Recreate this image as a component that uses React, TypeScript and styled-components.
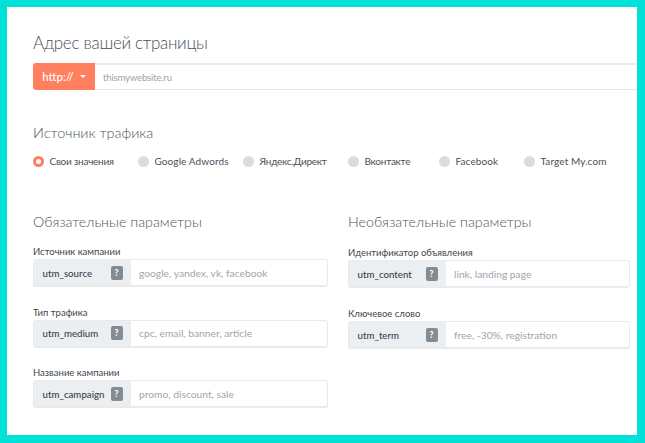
import React from "react";
import styled, { createGlobalStyle } from "styled-components";

const Global = createGlobalStyle`
  html, body { margin: 0; padding: 0; background: #00e2d8; }
  #root { width: 645px; height: 443px; overflow: hidden; }
  * { box-sizing: border-box; }
`;

const Frame = styled.div`
  width: 645px;
  height: 443px;
  border: solid #00e2d8;
  border-width: 7px 8px 8px 7px;
  background: #fff;
  padding: 0 0 0 26px;
  font-family: Lato, "Noto Sans", sans-serif;
  overflow: hidden;
`;

const Title = styled.h1`
  margin: 0;
  padding-top: 24px;
  height: 56px;
  font-size: 17px;
  letter-spacing: -0.3px;
  line-height: 24px;
  font-weight: 300;
  color: #4a5058;
`;

const UrlBar = styled.div`
  display: flex;
  height: 27px;
`;

const Scheme = styled.div`
  width: 62px;
  display: flex;
  align-items: center;
  justify-content: center;
  gap: 6px;
  background: #ff7f5f;
  border-radius: 3px 0 0 3px;
  color: #fff;
  font-size: 11.5px;
  font-weight: 500;
`;

const Caret = styled.span`
  width: 0;
  height: 0;
  border: 3px solid transparent;
  border-top-color: #fff;
  border-bottom-width: 0;
`;

const UrlField = styled.div`
  flex: 1;
  display: flex;
  align-items: center;
  padding: 0 0 0 8px;
  border-top: 2px solid #ececec;
  border-bottom: 1px solid #e6e6e6;
  font-size: 9.5px;
  letter-spacing: -0.15px;
  color: #9aa3ab;
`;

const SourceHeading = styled.h2`
  margin: 31px 0 0;
  height: 24px;
  font-size: 14.4px;
  line-height: 24px;
  font-weight: 300;
  color: #4e545b;
`;

const Radios = styled.div`
  margin-top: 9px;
  height: 14px;
  display: flex;
`;

const Radio = styled.label<{ $w: number; $tight?: boolean }>`
  width: ${(p) => p.$w}px;
  display: flex;
  align-items: center;
  gap: 5.5px;
  font-size: 10px;
  letter-spacing: ${(p) => (p.$tight ? "-0.25px" : "0.1px")};
  color: #4a5058;
  white-space: nowrap;
`;

const Dot = styled.span<{ $on?: boolean }>`
  width: 11px;
  height: 11px;
  flex: none;
  border-radius: 50%;
  background: ${(p) => (p.$on ? "#fff" : "#dcdcdc")};
  border: ${(p) => (p.$on ? "3px solid #ff7f5f" : "none")};
`;

const Columns = styled.div`
  margin-top: 42px;
  display: grid;
  grid-template-columns: 295px 282px;
  column-gap: 20px;
`;

const Column = styled.section`
  display: flex;
  flex-direction: column;
`;

const ColHeading = styled.h2<{ $gap: number }>`
  margin: 0 0 ${(p) => p.$gap}px;
  height: 24px;
  font-size: 14.25px;
  line-height: 24px;
  font-weight: 300;
  color: #4e545b;
`;

const Field = styled.div<{ $gap: number }>`
  margin-bottom: ${(p) => p.$gap}px;
`;

const FieldLabel = styled.div`
  height: 14px;
  font-size: 9.5px;
  line-height: 14px;
  color: #3f454c;
`;

const InputGroup = styled.div`
  display: flex;
  height: 28px;
  border: 1px solid #e8eaec;
  border-bottom-width: 2px;
  border-radius: 3px;
  overflow: hidden;
`;

const Addon = styled.div`
  flex: none;
  width: 97px;
  display: flex;
  align-items: center;
  justify-content: space-between;
  padding: 0 8.5px;
  background: #ebeff2;
  font-size: 9.7px;
  font-weight: 500;
  color: #3b4148;
`;

const Help = styled.span`
  width: 12px;
  height: 14px;
  flex: none;
  display: flex;
  align-items: center;
  justify-content: center;
  border-radius: 2px;
  background: #838b93;
  color: #fff;
  font-size: 8.5px;
  font-weight: 900;
`;

const Hint = styled.div`
  flex: 1;
  display: flex;
  align-items: center;
  padding-left: 8px;
  font-size: 10.25px;
  color: #9da6ad;
  white-space: nowrap;
`;

const radios: [string, number, boolean][] = [
  ["Свои значения", 105, true],
  ["Google Adwords", 105, false],
  ["Яндекс.Директ", 105, true],
  ["Вконтакте", 91, true],
  ["Facebook", 85, false],
  ["Target My.com", 90, false],
];

const required = [
  ["Источник кампании", "utm_source", "google, yandex, vk, facebook"],
  ["Тип трафика", "utm_medium", "cpc, email, banner, article"],
  ["Название кампании", "utm_campaign", "promo, discount, sale"],
];

const optional = [
  ["Идентификатор объявления", "utm_content", "link, landing page"],
  ["Ключевое слово", "utm_term", "free, -30%, registration"],
];

const Params = ({
  title,
  rows,
  headGap,
  rowGap,
}: {
  title: string;
  rows: string[][];
  headGap: number;
  rowGap: number;
}) => (
  <Column>
    <ColHeading $gap={headGap}>{title}</ColHeading>
    {rows.map(([label, name, hint]) => (
      <Field key={name} $gap={rowGap}>
        <FieldLabel>{label}</FieldLabel>
        <InputGroup>
          <Addon>
            {name}
            <Help>?</Help>
          </Addon>
          <Hint>{hint}</Hint>
        </InputGroup>
      </Field>
    ))}
  </Column>
);

export default function App() {
  return (
    <>
      <Global />
      <Frame>
        <Title>Адрес вашей страницы</Title>
        <UrlBar>
          <Scheme>
            http://
            <Caret />
          </Scheme>
          <UrlField>thismywebsite.ru</UrlField>
        </UrlBar>
        <SourceHeading>Источник трафика</SourceHeading>
        <Radios>
          {radios.map(([label, w, tight], i) => (
            <Radio key={label} $w={w} $tight={tight}>
              <Dot $on={i === 0} />
              {label}
            </Radio>
          ))}
        </Radios>
        <Columns>
          <Params title="Обязательные параметры" rows={required} headGap={11} rowGap={18.5} />
          <Params title="Необязательные параметры" rows={optional} headGap={12} rowGap={19} />
        </Columns>
      </Frame>
    </>
  );
}
